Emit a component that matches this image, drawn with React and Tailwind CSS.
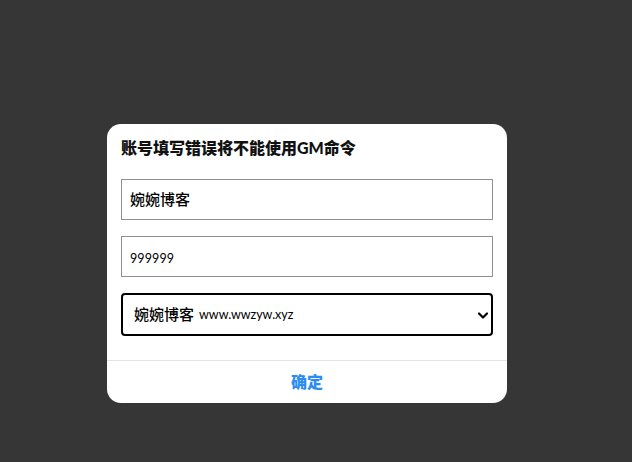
const FONT = "font-['Lato','Noto_Sans_CJK_SC',sans-serif]";

export default function App() {
  return (
    <div className={`w-[632px] h-[462px] bg-[#363636] pl-[107px] pt-[124px] ${FONT}`}>
      <div className="w-[400px] h-[279px] bg-white rounded-[14px] flex flex-col overflow-hidden">
        <div className="flex-1 px-[14px] pt-[14px]">
          <h2 className="text-[16px] leading-[20px] font-black text-[#111] mb-[21px]">账号填写错误将不能使用GM命令</h2>
          <input
            defaultValue="婉婉博客"
            className="block w-full h-[41px] border border-[#8f8f8f] px-2 pb-[2px] text-[15px] font-medium text-black outline-none mb-4"
          />
          <input
            defaultValue="999999"
            className="block w-full h-[41px] border border-[#8f8f8f] px-2 pt-[3px] text-[12.5px] tracking-[0.1px] text-black outline-none mb-4"
          />
          <div className="w-full h-[43px] border-2 border-black rounded-[4px] bg-white pl-[11px] pr-[2px] flex items-center text-black">
            <span className="text-[15px] font-medium">婉婉博客</span>
            <span className="text-[12.5px] ml-[5px] pt-[2px]">www.wwzyw.xyz</span>
            <svg className="ml-auto w-[12px] h-[12px]" viewBox="0 0 12 12" fill="none" stroke="currentColor" strokeWidth="2.2" strokeLinecap="round" strokeLinejoin="round">
              <path d="M2 4.5 6 8.5 10 4.5" />
            </svg>
          </div>
        </div>
        <div className="h-[43px] border-t border-[#e5e5e5] flex items-center justify-center">
          <span className="text-[16px] font-black text-[#2d8cf0]">确定</span>
        </div>
      </div>
    </div>
  );
}
